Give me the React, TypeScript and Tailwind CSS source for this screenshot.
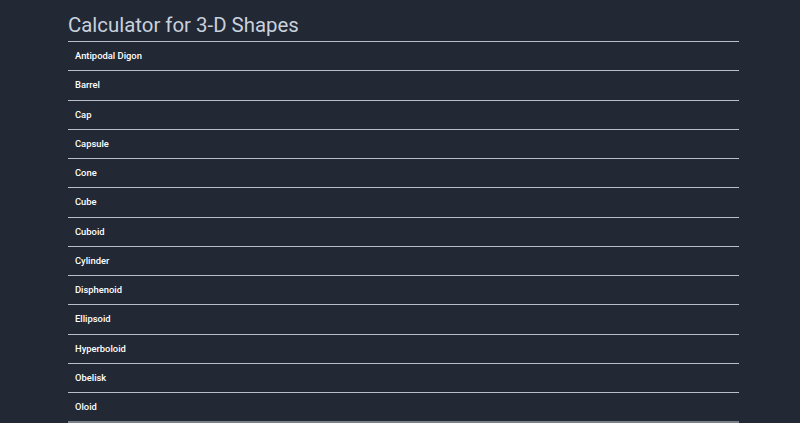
import React from "react";

const items = [
  "Antipodal Digon",
  "Barrel",
  "Cap",
  "Capsule",
  "Cone",
  "Cube",
  "Cuboid",
  "Cylinder",
  "Disphenoid",
  "Ellipsoid",
  "Hyperboloid",
  "Obelisk",
  "Oloid",
];

export default function App() {
  return (
    <div
      className="w-[800px] h-[423px] overflow-hidden bg-[#222834]"
      style={{ fontFamily: "Roboto, 'Open Sans', sans-serif" }}
    >
      <div className="ml-[68px] w-[671px]">
        <h1 className="pt-[12px] h-[41px] text-[20.4px] leading-[26px] text-[#c8d1de]">
          Calculator for 3-D Shapes
        </h1>
        {items.map((it) => (
          <div
            key={it}
            className="h-[29.25px] border-t border-[#b9c0ca] flex items-center pl-[7px] text-[9.4px] font-medium text-white"
          >
            {it}
          </div>
        ))}
        <div className="h-[20px] bg-[#7a808a]" />
      </div>
    </div>
  );
}
